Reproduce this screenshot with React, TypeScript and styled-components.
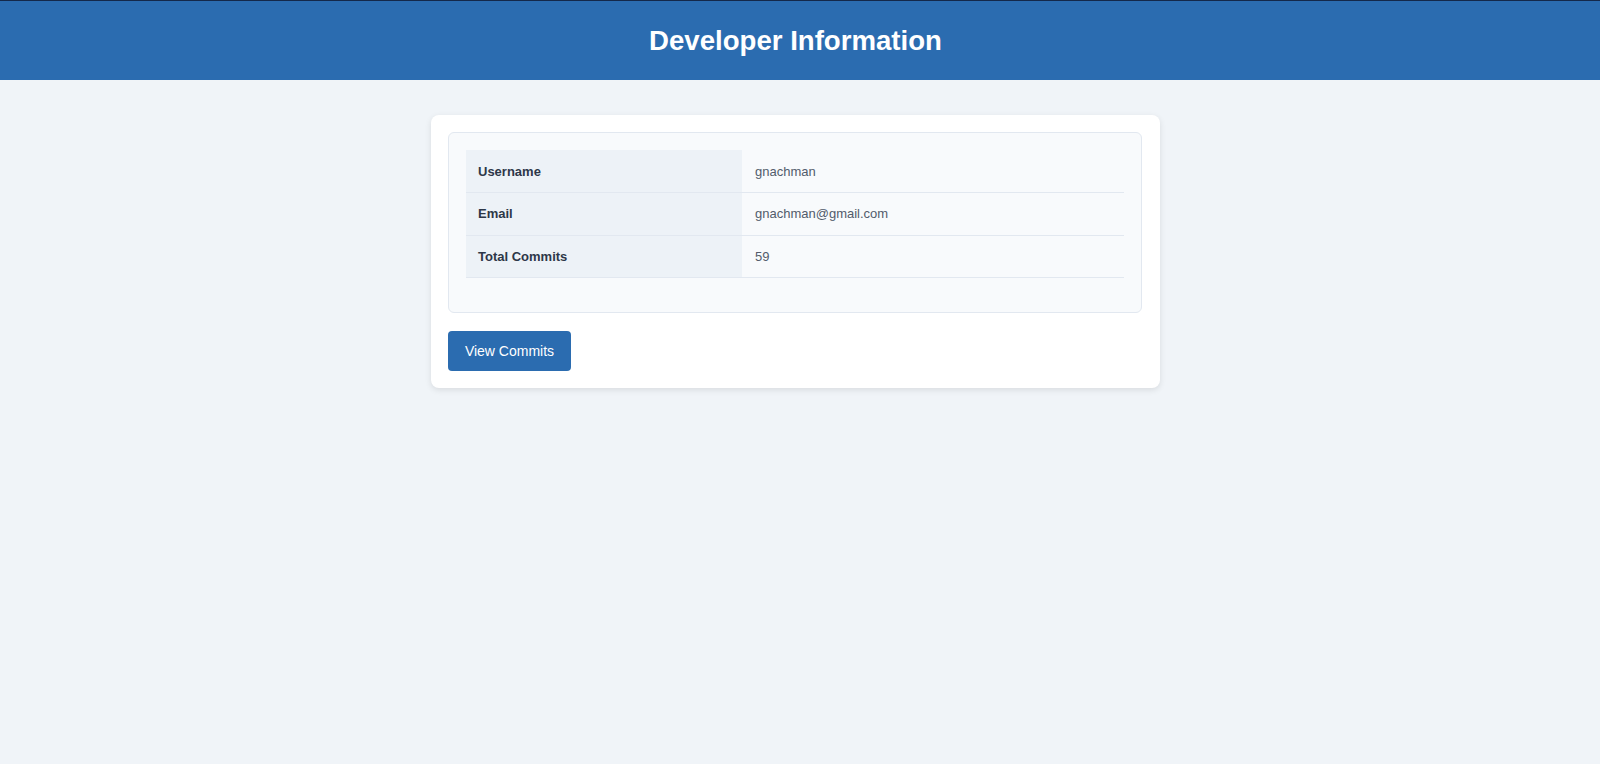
import React from "react";
import styled, { createGlobalStyle } from "styled-components";

const GlobalStyle = createGlobalStyle`
  html, body {
    margin: 0;
    padding: 0;
    background: #f0f4f8;
    font-family: "Liberation Sans", Arial, sans-serif;
  }
  * { box-sizing: border-box; }
`;

const Page = styled.div`
  min-height: 764px;
  background: #f0f4f8;
`;

const Header = styled.header`
  height: 80px;
  background: #2b6cb0;
  border-top: 1px solid #14284a;
  display: flex;
  align-items: center;
  justify-content: center;
  padding-right: 9px;
`;

const Title = styled.h1`
  margin: 0;
  color: #ffffff;
  font-size: 27.6px;
  font-weight: 700;
  line-height: 1;
`;

const Main = styled.main`
  display: flex;
  justify-content: center;
  padding: 35px 9px 0 0;
`;

const Card = styled.section`
  width: 729px;
  background: #ffffff;
  border-radius: 8px;
  box-shadow: 0 2px 6px rgba(0, 0, 0, 0.1);
  padding: 17px 18px 17px 17px;
  display: flex;
  flex-direction: column;
  align-items: flex-start;
  gap: 18px;
`;

const InfoBox = styled.div`
  width: 100%;
  background: #f8fafc;
  border: 1px solid #e2e8f0;
  border-radius: 6px;
  padding: 17px 17px 34px 17px;
`;

const Table = styled.table`
  width: 100%;
  border-collapse: collapse;
`;

const Row = styled.tr`
  height: 42.6px;
  border-bottom: 1px solid #e2e8f0;
`;

const Label = styled.th`
  width: 276px;
  background: #edf2f7;
  color: #2d3748;
  font-size: 13px;
  font-weight: 700;
  text-align: left;
  padding: 0 12px;
`;

const Value = styled.td`
  color: #525c6b;
  font-size: 13px;
  padding: 0 13px;
`;

const Button = styled.button`
  height: 40px;
  width: 123px;
  background: #2b6cb0;
  color: #ffffff;
  border: none;
  border-radius: 4px;
  font-family: "Liberation Sans", Arial, sans-serif;
  font-size: 14px;
  cursor: pointer;
  padding: 0;
`;

const rows = [
  { label: "Username", value: "gnachman" },
  { label: "Email", value: "gnachman@gmail.com" },
  { label: "Total Commits", value: "59" },
];

export default function App() {
  return (
    <>
      <GlobalStyle />
      <Page>
        <Header>
          <Title>Developer Information</Title>
        </Header>
        <Main>
          <Card>
            <InfoBox>
              <Table>
                <tbody>
                  {rows.map((r) => (
                    <Row key={r.label}>
                      <Label>{r.label}</Label>
                      <Value>{r.value}</Value>
                    </Row>
                  ))}
                </tbody>
              </Table>
            </InfoBox>
            <Button>View Commits</Button>
          </Card>
        </Main>
      </Page>
    </>
  );
}
